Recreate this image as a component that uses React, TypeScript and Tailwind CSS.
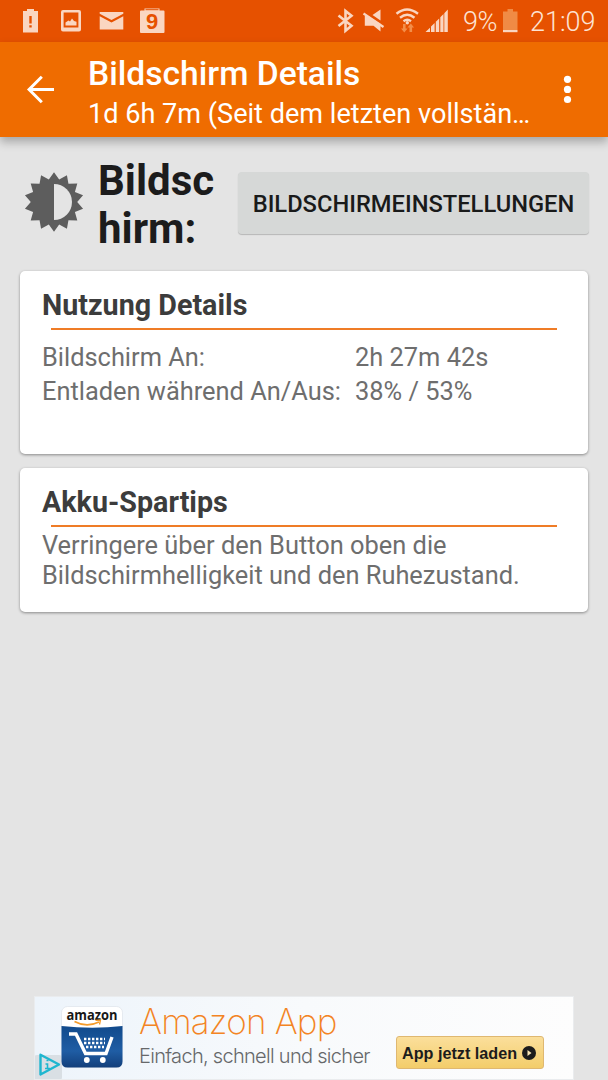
import type { ReactNode } from "react";

const usage = [
  { label: "Bildschirm An:", value: "2h 27m 42s" },
  { label: "Entladen während An/Aus:", value: "38% / 53%" },
];

// 14-pointed star used for the brightness icon
const sunPoints = Array.from({ length: 28 }, (_, i) => {
  const r = i % 2 === 0 ? 29.8 : 23.2;
  const a = (i * Math.PI) / 14;
  return `${(30 + r * Math.sin(a)).toFixed(2)},${(30 - r * Math.cos(a)).toFixed(2)}`;
}).join(" ");

function StatusBar() {
  return (
    <div className="flex h-[42px] items-center bg-[#e65100] text-[#fad6c1]">
      <svg width="170" height="42" viewBox="0 0 170 42" fill="currentColor">
        {/* battery alert */}
        <path d="M23 11h4V9h7v2h4v21.500H23z" />
        <path d="M29.300 16h2.400v7.500h-2.400zM29.300 25.200h2.400v2.300h-2.400z" fill="#e65100" />
        {/* picture */}
        <path fillRule="evenodd" d="M63 10h16q2 0 2 2v17.500q0 2-2 2H63q-2 0-2-2V12q0-2 2-2zm.6 2.500v15h14.800v-15z" />
        <path d="M65.500 25.500v-3l3-2 1.500 1 2-3 2 2.500 2.500.8v3.700z" />
        {/* mail */}
        <path d="M99.700 12h23.600v1.800L111.500 20l-11.800-6.200z" />
        <path d="M99.700 16.300l11.800 6.200 11.800-6.200V29.500H99.700z" />
        {/* calendar */}
        <path d="M144.500 8.500h15v2h4q1 0 1 1V32q0 1-1 1h-22.500q-1 0-1-1V11.500q0-1 1-1h3.500z" />
        <path d="M145.500 9.700h13" stroke="#e65100" strokeWidth="1" />
        <text x="152.200" y="29.300" textAnchor="middle" fill="#e65100" fontSize="22" fontWeight="700" fontFamily="'Liberation Sans', sans-serif">9</text>
      </svg>
      <svg className="ml-[160px]" width="124" height="42" viewBox="330 0 124 42" fill="currentColor">
        {/* bluetooth */}
        <path d="M338.500 15.500l13 10.200-6 5V11l6 4.800-13 10.200" fill="none" stroke="currentColor" strokeWidth="2.600" />
        {/* muted speaker */}
        <path d="M364.800 16h3.500l12.200 8v7.500l-7-5.800h-8.700zM372.500 15l8-5.500V20.500z" />
        <path d="M363.500 13.500l20 13.500" stroke="currentColor" strokeWidth="2.200" />
        {/* wifi */}
        <g fill="none" stroke="currentColor" strokeWidth="2.400">
          <path d="M396.500 13.700q10.500-8.500 21.500 0" />
          <path d="M400 17.700q7.200-5.800 14.500 0" />
          <path d="M403.500 21.200q3.800-2.700 7.500 0" />
        </g>
        <circle cx="407.300" cy="22.800" r="1.700" />
        <path d="M403 24h2.600v4.500h2l-3.300 4-3.300-4h2zM409.500 32v-4.500h-2l3.300-4 3.300 4h-2V32z" fill="#f38e49" />
        {/* signal */}
        <path d="M425.500 32l4.500-4.300V32zM431 26.500l3.600-3.500v9H431zM435.800 21.700l3.400-3.300V32h-3.400zM440.300 17.200l3.200-3.200v18h-3.200zM444.300 13.200l3.500-3.600V32h-3.500z" />
      </svg>
      <span className="mt-[2px] ml-[9px] w-[35px] text-[27px] leading-[42px] font-light tracking-[-0.5px] whitespace-nowrap text-[#fde3d3]">9%</span>
      <svg className="ml-[4px]" width="17" height="42" viewBox="0 0 17 42">
        <path d="M1 11.500h4.500V9H11v2.500h4.500V30H1z" fill="#f08b45" />
        <path d="M1 30h14.500v2.200H1z" fill="#fad6c1" />
      </svg>
      <span className="mt-[2px] ml-[11px] text-[27px] leading-[42px] font-light whitespace-nowrap text-[#fde3d3]">21:09</span>
    </div>
  );
}

function AppBar() {
  return (
    <header className="relative flex h-[95px] bg-[#ef6c00] text-white shadow-[0_5px_9px_rgba(0,0,0,0.27)]">
      <svg width="88" height="95" viewBox="0 42 88 95" fill="none" stroke="white" strokeWidth="3">
        <path d="M54 89.500H29M41.800 76.800L29.100 89.500l12.700 12.700" />
      </svg>
      <div className="w-[446px] pt-[13px]">
        <h1 className="text-[33.600px] leading-[38px] font-medium whitespace-nowrap">Bildschirm Details</h1>
        <p className="mt-[5px] text-[27.100px] leading-[32px] whitespace-nowrap">1d 6h 7m (Seit dem letzten vollstän…</p>
      </div>
      <svg className="ml-auto" width="74" height="95" viewBox="534 42 74 95" fill="white">
        <circle cx="567.500" cy="79.300" r="3.600" />
        <circle cx="567.500" cy="89.400" r="3.600" />
        <circle cx="567.500" cy="99.500" r="3.600" />
      </svg>
    </header>
  );
}

function Card({ title, className, children }: { title: string; className: string; children: ReactNode }) {
  return (
    <section className={`mx-5 rounded-[5px] bg-white px-[22px] shadow-[0_1px_3px_rgba(0,0,0,0.4)] ${className}`}>
      <h2 className="pt-[17px] text-[28.700px] leading-[34px] font-bold text-[#3c3c3c]">{title}</h2>
      <div className="mt-[6px] mr-[9px] ml-[9px] h-[2px] bg-[#ef7c26]" />
      {children}
    </section>
  );
}

function AmazonAd() {
  return (
    <div className="mt-auto mr-[34px] ml-[34px] flex h-[84px] border border-[#eaecee] bg-linear-to-r from-[#edf4fb] via-[#f8fafc] to-[#fdfdfd]">
      <svg width="103" height="82" viewBox="35 997 103 82">
        <defs>
          <linearGradient id="tile" x1="0" y1="0" x2="0" y2="1">
            <stop offset="0" stopColor="#114a8c" />
            <stop offset="0.6" stopColor="#1f5da4" />
            <stop offset="1" stopColor="#123f7b" />
          </linearGradient>
        </defs>
        <rect x="34" y="1055" width="28" height="25" rx="3" fill="#d9dfe4" />
        <rect x="61.500" y="1006.500" width="61" height="61" rx="6" fill="white" stroke="#dde3e9" strokeWidth="0.700" />
        <path d="M61.500 1026q31 3.500 61 0v35.500q0 6-6 6h-49q-6 0-6-6z" fill="url(#tile)" />
        <text x="66.500" y="1019.500" textLength="51" lengthAdjust="spacingAndGlyphs" fontSize="14.500" fontWeight="700" fontFamily="'Open Sans', sans-serif" fill="#171717">amazon</text>
        <path d="M74.500 1021.500q12 6.500 24.500.5" fill="none" stroke="#f49b2b" strokeWidth="1.700" />
        <path d="M95.500 1020.300l5-.3-1 4.500" fill="none" stroke="#f49b2b" strokeWidth="1.300" />
        <path d="M69 1034h7l9.500 19.500h20.500l6-16.500" fill="none" stroke="white" strokeWidth="3.400" />
        <path d="M84 1039h21M84 1043h21M86 1047h18" stroke="white" strokeWidth="2.400" strokeDasharray="2.400 1.600" />
        <circle cx="86.800" cy="1060" r="2.900" fill="white" />
        <circle cx="102.800" cy="1060" r="2.900" fill="white" />
        {/* ad choices */}
        <path d="M40.500 1054.800l18.500 9.700-18.500 10z" fill="none" stroke="#1fb6cf" strokeWidth="2.400" strokeLinejoin="round" />
        <path d="M46.500 1060.500h2M45.500 1064h2v4.500M45 1068.500h5" fill="none" stroke="#1fb6cf" strokeWidth="1.600" />
      </svg>
      <div className="w-[258px] pt-[2px] pl-[1px] whitespace-nowrap">
        <p className="font-[Inter] text-[35px] leading-[44px] font-extralight tracking-[-0.8px] text-[#f38424]">Amazon App</p>
        <p className="mt-[2px] font-[Inter] text-[20px] leading-[22px] font-light tracking-[-0.700px] text-[#66686a]">Einfach, schnell und sicher</p>
      </div>
      <div className="mt-[39px] flex h-[33px] w-[148px] items-center rounded-[3px] border border-[#dfb871] bg-linear-to-b from-[#fbdf9b] to-[#f3cd6a] pl-[5px] text-[#1c1c1c]">
        <span className="font-['Liberation_Sans'] text-[16.200px] leading-5 font-bold whitespace-nowrap">App jetzt laden</span>
        <svg className="ml-[5px] shrink-0" width="14" height="14" viewBox="0 0 14 14">
          <circle cx="7" cy="7" r="7" fill="#1c1c1c" />
          <path d="M5.500 4l4 3-4 3z" fill="#f8e4b4" />
        </svg>
      </div>
    </div>
  );
}

export default function App() {
  return (
    <div className="flex h-[1080px] w-[608px] flex-col overflow-hidden bg-[#e4e4e4] font-[Roboto,sans-serif]">
      <StatusBar />
      <AppBar />
      <div className="flex h-[134px] pl-[24px]">
        <svg className="mt-[35px]" width="60" height="60" viewBox="0 0 60 60">
          <polygon points={sunPoints} fill="#5d5d5d" />
          <path d="M30 12a18 18 0 0 1 0 36z" fill="#e4e4e4" />
        </svg>
        <h2 className="mt-[20px] ml-[14px] w-[140px] text-[42px] leading-[47.500px] font-bold text-[#1c1c1c]">
          Bildsc
          <br />
          hirm:
        </h2>
        <button className="mt-[35px] h-[62px] w-[351px] rounded-[4px] bg-[#d6d8d7] pt-[3px] text-[23.700px] font-medium whitespace-nowrap text-[#191a1a] shadow-[0_1px_1px_rgba(0,0,0,0.2)]">
          BILDSCHIRMEINSTELLUNGEN
        </button>
      </div>
      <Card title="Nutzung Details" className="h-[183px]">
        <dl className="mt-[10px] grid grid-cols-[313px_1fr] text-[25.400px] leading-[34px] whitespace-nowrap text-[#6e6e6e]">
          {usage.map((row) => (
            <div key={row.label} className="contents">
              <dt>{row.label}</dt>
              <dd>{row.value}</dd>
            </div>
          ))}
        </dl>
      </Card>
      <Card title="Akku-Spartips" className="mt-[14px] h-[144px]">
        <p className="mt-[3px] text-[25.400px] leading-[30px] whitespace-nowrap text-[#6e6e6e]">
          Verringere über den Button oben die
          <br />
          Bildschirmhelligkeit und den Ruhezustand.
        </p>
      </Card>
      <AmazonAd />
    </div>
  );
}
